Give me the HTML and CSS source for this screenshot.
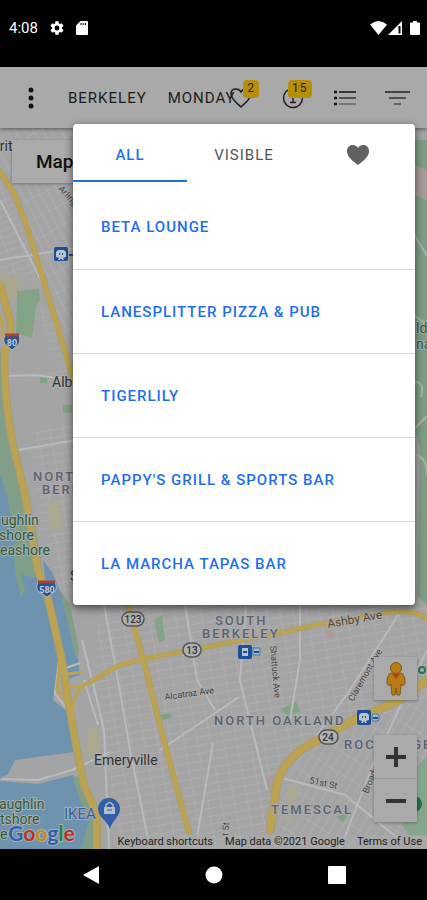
FILE: index.html
```html
<!DOCTYPE html>
<html lang="en">
<head>
<meta charset="utf-8">
<meta name="viewport" content="width=device-width, initial-scale=1">
<title>Berkeley map</title>
<link rel="stylesheet" href="styles.css">
</head>
<body>
<div class="status">
  <div class="status-side">
    <span class="clock">4:08</span>
    <svg width="16" height="16" viewBox="0 0 24 24" fill="#fff"><path d="M19.4 13c0-.3.1-.6.1-1s0-.7-.1-1l2.1-1.6c.2-.2.3-.4.1-.7l-2-3.400c-.1-.2-.4-.3-.6-.2l-2.500 1c-.5-.4-1.100-.7-1.700-1L14.500 2.400c0-.2-.3-.4-.5-.4h-4c-.2 0-.5.200-.5.400L9.200 5.100c-.6.3-1.200.6-1.700 1L5 5.100c-.2-.1-.5 0-.6.200l-2 3.400c-.1.300-.1.500.1.700L4.600 11c0 .3-.1.600-.1 1s0 .7.1 1l-2.100 1.600c-.2.200-.3.400-.1.700l2 3.400c.1.200.4.300.6.200l2.500-1c.5.400 1.100.7 1.700 1l.3 2.700c0 .2.300.4.500.4h4c.2 0 .5-.2.5-.4l.3-2.700c.6-.3 1.200-.6 1.700-1l2.500 1c.2.100.5 0 .6-.2l2-3.400c.1-.3.100-.5-.1-.7zM12 15.600a3.600 3.600 0 1 1 0-7.200 3.600 3.600 0 0 1 0 7.200z"/></svg>
    <svg class="sd" width="12" height="14" viewBox="0 0 12 14"><path d="M4.500 0H11q1 0 1 1v12q0 1-1 1H1q-1 0-1-1V4.500z" fill="#fff"/><path d="M5 2v2M7.200 2v2M9.400 2v2" stroke="#000"/></svg>
  </div>
  <div class="status-side signals">
    <svg width="17" height="14" viewBox="0 0 17 14"><path d="M0 3.500Q8.500-3.500 17 3.500L8.500 14z" fill="#fff"/></svg>
    <svg width="15" height="14" viewBox="0 0 15 14"><path d="M14 0v14H0z" fill="#fff"/><path d="M11.500 5v7.500" stroke="#000" stroke-width="2"/></svg>
    <svg class="battery" width="10" height="14" viewBox="0 0 10 14"><path d="M3 0h4v1.500h2q1 0 1 1V13q0 1-1 1H1q-1 0-1-1V2.500q0-1 1-1h2z" fill="#fff"/></svg>
  </div>
</div>

<header class="toolbar">
  <button class="icon-btn more" aria-label="More">
    <svg width="6" height="22" viewBox="0 0 6 22" fill="#111"><circle cx="3" cy="3" r="2.500"/><circle cx="3" cy="11" r="2.500"/><circle cx="3" cy="19" r="2.500"/></svg>
  </button>
  <div class="filters">
    <button class="text-btn">BERKELEY</button>
    <button class="text-btn">MONDAY</button>
  </div>
  <button class="icon-btn" aria-label="Favorites">
    <svg width="22" height="22" viewBox="0 0 22 22" fill="none" stroke="#222" stroke-width="1.500"><path d="M11 20C7 16 1 12 1 7c0-3 2-5 4.800-5C8 2 10 3 11 5c1-2 3-3 5.200-3C19 2 21 4 21 7c0 5-6 9-10 13z"/></svg>
    <span class="badge">2</span>
  </button>
  <button class="icon-btn" aria-label="Information">
    <svg width="22" height="22" viewBox="0 0 22 22" fill="none" stroke="#222" stroke-width="1.500"><circle cx="11" cy="11" r="9.500"/><path d="M9 9h2v6M8 15.500h6"/><path d="M11 5v2"/></svg>
    <span class="badge wide">15</span>
  </button>
  <button class="icon-btn" aria-label="List">
    <svg width="22" height="16" viewBox="0 0 22 16" fill="none"><path d="M5 2h17" stroke="#111" stroke-width="1.500"/><path d="M5 8h17" stroke="#333" stroke-width="1.500"/><path d="M5 14h17" stroke="#777" stroke-width="2"/><path d="M0 2h3M0 8h3M0 14h3" stroke="#111" stroke-width="2.500"/></svg>
  </button>
  <button class="icon-btn" aria-label="Filter">
    <svg width="25" height="16" viewBox="0 0 25 16" fill="none"><path d="M0 2h25" stroke="#222" stroke-width="1.500"/><path d="M4 8h17" stroke="#333" stroke-width="1.500"/><path d="M9 14h7" stroke="#666" stroke-width="2"/></svg>
  </button>
</header>

<main class="map">
  <svg class="map-art" viewBox="0 128 427 721" preserveAspectRatio="xMidYMid slice" role="img" aria-label="Street map of Berkeley and Emeryville">
    <defs>
      <pattern id="gridA" width="13" height="8" patternUnits="userSpaceOnUse" patternTransform="rotate(-10)"><path d="M0 0H13M0 0V8" stroke="#b3b4b6" fill="none"/></pattern>
      <pattern id="gridB" width="16" height="7" patternUnits="userSpaceOnUse" patternTransform="rotate(-20)"><path d="M0 0H16M0 0V7" stroke="#b3b4b6" fill="none"/></pattern>
      <pattern id="gridC" width="8" height="19" patternUnits="userSpaceOnUse" patternTransform="rotate(-28)"><path d="M0 0H8M0 0V19" stroke="#b3b4b6" fill="none"/></pattern>
      <pattern id="gridD" width="8" height="19" patternUnits="userSpaceOnUse" patternTransform="rotate(32)"><path d="M0 0H8M0 0V19" stroke="#b3b4b6" fill="none"/></pattern>
    </defs>
    <rect y="128" width="427" height="721" fill="#a4a4a5"/>
    <path d="M0 128H80V350L66 340L40 260L12 190L0 170z" fill="url(#gridC)"/>
    <path d="M0 180L16 210L40 285L0 270z" fill="url(#gridB)"/>
    <path d="M38 300L56 330L80 400V600L60 590L38 510L30 430L76 420V380H34V372H55z" fill="url(#gridA)"/>
    <path d="M100 605H427V700L280 760L268 849H110L96 720L92 690z" fill="url(#gridA)"/>
    <path d="M290 760L427 690V849H274z" fill="url(#gridD)"/>
    <path d="M0 274L22 280L18 300L4 300z" fill="#aaa78f"/>
    <path d="M17 291L39 289L40 300L36 307L32 337L16 334z" fill="#83a386"/>
    <path d="M0 345L4 390L20 465L36 530L44 580L20 575L0 500z" fill="#819f88"/>
    <path d="M0 474L8 500L16 545L22 575L46 580L50 605L60 650L53 700L70 714L74 752L15 760L8 774L0 778z" fill="#6e93af"/>
    <path d="M12 545L36 540L40 575L20 572L25 590L21 597L16 575z" fill="#819f88"/>
    <path d="M43 560L52 572L66 605L77 650L80 675L66 680L60 660L48 610z" fill="#6e93af"/>
    <path d="M60 590L70 605L79 650L76 660L65 610z" fill="#819f88"/>
    <path d="M0 781L38 784L73 775L81 800L90 820L85 849H0z" fill="#6e93af"/>
    <path d="M72 775L80 778L97 820L94 849H81L89 820L80 800z" fill="#819f88"/>
    <path d="M154 620l8-5 3 25-6 3zM281 709l15-8 4 11-13 4zM160 715l10-2 2 5-9 2z" fill="#83a386"/>
    <path d="M48 503l10-2 5 26-13 5zM88 728h12v27H85zM288 788l12-6-8 40-7-2z" fill="#aaa88f"/>
    <path d="M40 377h7v6h-7zM63 405h9v8h-9zM336 817l12-5-4 10z" fill="#83a386"/>
    <path d="M267 777l12-2v15l-12 3zM326 630h8v8h-8z" fill="#ad9a9a"/>
    <path d="M413 140H427V605L417 595L420 450L413 420z" fill="#7f9d84"/>
    <path d="M414 165l13 5v30l-13-5z" fill="#a59b99"/>
    <path d="M427 757Q405 770 412 815L402 825L410 836L427 835z" fill="#86a68b"/>
    <path d="M414 234l13 22M414 315l13 10M415 428l12-12M415 455q12 2 12 20M415 382q10 0 6 15" fill="none" stroke="#a9b3aa" stroke-width="2"/>
    <path d="M82 640L97 700L104 730L109 849M60 652L55 694L70 712M66 668L80 663M84 680L98 725M8 376L34 375L75 380M8 376L8 385M18 450L76 440M0 260L75 248M0 200L42 282M2 779L38 780L72 770L110 752M104 605L118 680L130 750L150 849M185 605L197 680L215 710M246 605L240 680L267 790M239 697L160 750M300 605L300 660L290 720M400 612L350 690L310 745M427 650L375 760L340 849M213 743L195 849M282 778L345 795L400 840" fill="none" stroke="#b9babc" stroke-width="2"/>
    <g fill="none" stroke-linecap="round" stroke-linejoin="round">
      <g stroke="#aa9c70">
        <path d="M0 285L10 320L11 345L5 350Q3 390 12 440L25 495L38 570L48 598L62 660L68 700L76 745L84 785L97 815V849" stroke-width="8"/>
        <path d="M0 172L15 195L28 230L42 275L60 335L75 385M127 603L143 658L165 745L189 832" stroke-width="6"/>
        <path d="M90 682L120 665L143 659L190 650L285 632L320 624L385 613Q413 608 427 619" stroke-width="5"/>
        <path d="M270 830L276 790Q280 758 318 740L350 722L400 700L427 680" stroke-width="9"/>
      </g>
      <g stroke="#bba351">
        <path d="M0 285L10 320L11 345L5 350Q3 390 12 440L25 495L38 570L48 598L62 660L68 700L76 745L84 785L97 815V849" stroke-width="6"/>
        <path d="M0 315L5 345M60 660L57 690L68 702M68 674L82 672M66 684Q73 690 84 684M90 682Q74 688 73 710" stroke-width="3"/>
        <path d="M0 172L15 195L28 230L42 275L60 335L75 385M127 603L143 658L165 745L189 832" stroke-width="5"/>
        <path d="M90 682L120 665L143 659L190 650L285 632L320 624L385 613Q413 608 427 619" stroke-width="4"/>
        <path d="M270 830L276 790Q280 758 318 740L350 722L400 700L427 680" stroke-width="7"/>
      </g>
    </g>
    <g class="area">
      <text x="33" y="481">NORTH</text><text x="42" y="494">BERKELEY</text>
      <text x="215" y="625">SOUTH</text><text x="202" y="638">BERKELEY</text>
      <text x="214" y="725">NORTH OAKLAND</text><text x="344" y="749">ROCKRIDGE</text>
      <text x="271" y="814">TEMESCAL</text>
    </g>
    <g class="place">
      <text x="-5" y="151">rrit</text><text x="52" y="387">Albany</text><text x="94" y="765">Emeryville</text>
      <text x="70" y="581">S</text>
    </g>
    <g class="park">
      <text x="1" y="525">ughlin</text><text x="-1" y="540">shore</text><text x="0" y="555">eashore</text>
      <text x="-1" y="809">aughlin</text><text x="0" y="824">tshore</text><text x="0" y="839">e</text>
      <text x="416" y="333">ld</text><text x="416" y="349">na</text>
    </g>
    <g class="street">
      <text class="major" transform="translate(328 628) rotate(-10)">Ashby Ave</text>
      <text transform="translate(165 700) rotate(-8)">Alcatraz Ave</text>
      <text transform="translate(270 646) rotate(85)">Shattuck Ave</text>
      <text transform="translate(353 702) rotate(-60)">Claremont Ave</text>
      <text transform="translate(309 783) rotate(12)">51st St</text>
      <text transform="translate(368 794) rotate(-68)">Broadway</text>
      <text transform="translate(58 189) rotate(48)">Arlington</text>
      <text transform="translate(228 836) rotate(-85)">t St</text>
    </g>
    <g fill="#b0b0b0" stroke="#555" stroke-width="1.500"><rect x="122" y="612" width="22" height="14" rx="7"/><rect x="183" y="643" width="18" height="14" rx="7"/><rect x="319" y="730" width="19" height="14" rx="7"/></g>
    <g class="shield"><text x="133" y="623">123</text><text x="192" y="654">13</text><text x="328" y="741">24</text></g>
    <g fill="#2b558f" stroke="#aab4c0"><path d="M5 335h14q2 7-1 10l-6 5-6-5q-4-3-1-10z"/><path d="M38 582h17q3 7-1 10l-7 5-8-5q-4-3-1-10z"/></g>
    <path d="M5 335h14M38 582h17" stroke="#a64239" stroke-width="3"/>
    <g class="interstate"><text x="12" y="346">80</text><text x="47" y="593">580</text></g>
    <g fill="#1c4f99"><rect x="54" y="247" width="14" height="14" rx="2"/><rect x="238" y="645" width="14" height="14" rx="2"/><rect x="357" y="710" width="14" height="15" rx="2"/></g>
    <g fill="#bac2cc"><path d="M58 250h6l2 2v5l-3 1 1 2h-2l-1-2-1 2h-2l1-2-3-1v-5z"/><path d="M242 648h6v8h-6z"/><path d="M361 713h6l2 2v5l-3 1 1 2h-2l-1-2-1 2h-2l1-2-3-1v-5z"/></g>
    <path d="M59 254h1M62 254h1M243 652h4M362 717h1M365 717h1" stroke="#1c4f99" stroke-width="2"/>
    <g fill="#aab8c7" stroke="#427aa0"><rect x="253" y="648" width="7" height="7"/><rect x="372" y="714" width="7" height="7" rx="2"/></g>
    <path d="M69 255h5M254 652h5M373 718h5" stroke="#1c4f99" stroke-width="2"/>
    <path d="M98 809a11 11 0 1 1 22 0c0 8-8 11-10 20-3-9-12-12-12-20z" fill="#315fa8"/>
    <path d="M104 807h11v7h-11z" fill="#b4bdc9"/><path d="M106 807v-2q3.500-5 7 0v2" fill="none" stroke="#b4bdc9" stroke-width="1.500"/><path d="M107 810h5" stroke="#315fa8"/>
    <text class="ikea" x="64" y="819">IKEA</text>
    <circle cx="422" cy="670" r="3" fill="#a9a9a9" stroke="#28734a" stroke-width="2"/><circle cx="414" cy="804" r="8" fill="#1f713f"/>
    <text class="google" x="8" y="841"><tspan fill="#2f5fb0">G</tspan><tspan fill="#b0352b">o</tspan><tspan fill="#c08f14">o</tspan><tspan fill="#2f5fb0">g</tspan><tspan fill="#2c8046">l</tspan><tspan fill="#b0352b">e</tspan></text>
  </svg>
  <button class="map-type">Map</button>
  <div class="controls">
    <button class="control" aria-label="Street View">
      <svg width="20" height="34" viewBox="0 0 20 34" fill="#b87b15" stroke="#80591b"><path d="M5 11h10q4 1 4 11l-3 2-1-2-1 11h-3l-1-7-1 7H6L5 22l-1 2-3-2Q1 12 5 11z"/><circle cx="10" cy="6" r="5.500"/><path d="M6 12l4 5 4-5z" fill="#a94716" stroke="none"/></svg>
    </button>
    <div class="zoom">
      <button class="control" aria-label="Zoom in"><svg width="20" height="20" viewBox="0 0 20 20"><path d="M0 10h20M10 0v20" stroke="#333" stroke-width="4"/></svg></button>
      <button class="control" aria-label="Zoom out"><svg width="20" height="20" viewBox="0 0 20 20"><path d="M0 10h20" stroke="#333" stroke-width="4"/></svg></button>
    </div>
  </div>
  <div class="credits"><button>Keyboard shortcuts</button><span>Map data ©2021 Google</span><a href="#">Terms of Use</a></div>

  <section class="popover" aria-label="Venues">
    <div class="tabs">
      <button class="tab active">ALL</button>
      <button class="tab">VISIBLE</button>
      <button class="tab" aria-label="Favorites"><svg width="22" height="20" viewBox="0 0 22 20"><path d="M11 20C6 16 0 12 0 6c0-3.500 2.500-6 5.500-6C8 0 10 1 11 3c1-2 3-3 5.500-3C19.500 0 22 2.500 22 6c0 6-6 10-11 14z" fill="#616161"/></svg></button>
    </div>
    <ul class="venues">
      <li><a href="#">BETA LOUNGE</a></li>
      <li><a href="#">LANESPLITTER PIZZA &amp; PUB</a></li>
      <li><a href="#">TIGERLILY</a></li>
      <li><a href="#">PAPPY'S GRILL &amp; SPORTS BAR</a></li>
      <li><a href="#">LA MARCHA TAPAS BAR</a></li>
    </ul>
  </section>
</main>

<nav class="system-nav">
  <button aria-label="Back"><svg width="18" height="20" viewBox="0 0 18 20"><path d="M17 1v18L1 10z" fill="#fff"/></svg></button>
  <button aria-label="Home"><svg width="18" height="18" viewBox="0 0 18 18"><circle cx="9" cy="9" r="8.500" fill="#fff"/></svg></button>
  <button aria-label="Recent apps"><svg width="18" height="18" viewBox="0 0 18 18"><rect width="18" height="18" rx="1" fill="#fff"/></svg></button>
</nav>
</body>
</html>
```
FILE: styles.css
```css
* { box-sizing: border-box; }

body {
  margin: 0;
  min-height: 100vh;
  display: flex;
  flex-direction: column;
  background: #000;
  font-family: Roboto, "Liberation Sans", sans-serif;
}

button {
  margin: 0;
  padding: 0;
  border: 0;
  background: none;
  color: inherit;
  font: inherit;
  letter-spacing: inherit;
}

a { color: inherit; text-decoration: none; }
svg { display: block; flex: none; }

.status {
  height: 67px;
  padding: 0 7px 12px 9px;
  display: flex;
  align-items: center;
  justify-content: space-between;
  color: #fff;
}

.status-side { display: flex; align-items: center; gap: 11px; }
.signals { gap: 1px; }
.battery { margin-left: 6px; }
.clock { font-size: 15px; line-height: 20px; }

.toolbar {
  height: 61px;
  padding-right: 4px;
  display: flex;
  align-items: center;
  background: #a9a9a9;
  box-shadow: 0 1px 4px rgba(0, 0, 0, .5);
  color: #1c1c1c;
  z-index: 1;
}

.icon-btn {
  position: relative;
  flex: none;
  width: 52px;
  height: 52px;
  display: grid;
  place-items: center;
}

.more { margin-left: 5px; }

.filters {
  flex: 1;
  min-width: 0;
  padding-left: 11px;
  display: flex;
  gap: 21px;
  white-space: nowrap;
  font-size: 15px;
  letter-spacing: 1px;
}

.badge {
  position: absolute;
  top: 8px;
  left: 28px;
  min-width: 16px;
  height: 18px;
  padding: 0 4px;
  border-radius: 4px;
  background: #b88d08;
  color: #29220b;
  font-size: 12px;
  line-height: 17px;
  letter-spacing: 1px;
}

.wide { left: 21px; }

.map {
  position: relative;
  flex: 1;
  min-height: 500px;
  background: #a4a4a5;
}

.map-art {
  position: absolute;
  inset: 0;
  width: 100%;
  height: 100%;
}

.map-art text {
  paint-order: stroke;
  stroke: #adadad;
  stroke-width: 2px;
  stroke-linejoin: round;
}

.area { fill: #5b6273; font-size: 13px; font-weight: 500; letter-spacing: 2px; }
.place { fill: #333; font-size: 14px; }
.park { fill: #2b5e40; font-size: 14px; }
.street { fill: #444; font-size: 9px; }
.street .major { fill: #5b4428; font-size: 12px; }
.shield { fill: #333; font-size: 10px; font-weight: 500; text-anchor: middle; }
.interstate { fill: #c2cad5; font-size: 9px; font-weight: 700; text-anchor: middle; }
.map-art .shield text, .map-art .interstate text { stroke: none; }
.ikea { fill: #315fa8; font-size: 15px; }
.google { font-size: 21px; font-weight: 700; font-family: Lato, sans-serif; }

.map-type {
  position: absolute;
  top: 12px;
  left: 12px;
  width: 88px;
  height: 43px;
  padding-left: 24px;
  background: #ababab;
  box-shadow: 0 1px 3px rgba(0, 0, 0, .3);
  color: #111;
  font-size: 19px;
  font-weight: 500;
  text-align: left;
}

.controls {
  position: absolute;
  right: 10px;
  bottom: 27px;
  display: flex;
  flex-direction: column;
  gap: 35px;
}

.control {
  width: 43px;
  height: 43px;
  display: grid;
  place-items: center;
  background: #aaa;
}

.controls > * { box-shadow: 0 1px 3px rgba(0, 0, 0, .3); }
.zoom .control + .control { height: 44px; border-top: 1px solid #999; }

.credits {
  position: absolute;
  right: 0;
  bottom: 0;
  padding: 0 5px 0 1px;
  display: flex;
  gap: 12px;
  background: rgba(170, 170, 170, .6);
  color: #222;
  font-size: 11px;
  line-height: 14px;
  white-space: nowrap;
}

.popover {
  position: absolute;
  top: -4px;
  left: 73px;
  right: 12px;
  border-radius: 4px;
  background: #fff;
  box-shadow: 0 3px 8px rgba(0, 0, 0, .6);
  font-size: 15px;
  letter-spacing: 1px;
  z-index: 2;
}

.tabs { display: grid; grid-template-columns: repeat(3, 1fr); }

.tab {
  height: 58px;
  padding-top: 6px;
  display: grid;
  place-items: center;
  border-bottom: 2px solid transparent;
  color: #555;
}

.active { color: #1b72e8; border-color: #1b72e8; font-weight: 500; }

.venues { margin: 0; padding: 3px 0 0; list-style: none; }
.venues li + li { border-top: 1px solid #d8d8d8; }

.venues a {
  height: 83px;
  padding: 0 28px;
  display: flex;
  align-items: center;
  color: #1f6fee;
  font-weight: 500;
}

.venues li:first-child a { height: 84px; }

.system-nav {
  height: 51px;
  display: flex;
  align-items: center;
  justify-content: center;
  gap: 105px;
}
```
